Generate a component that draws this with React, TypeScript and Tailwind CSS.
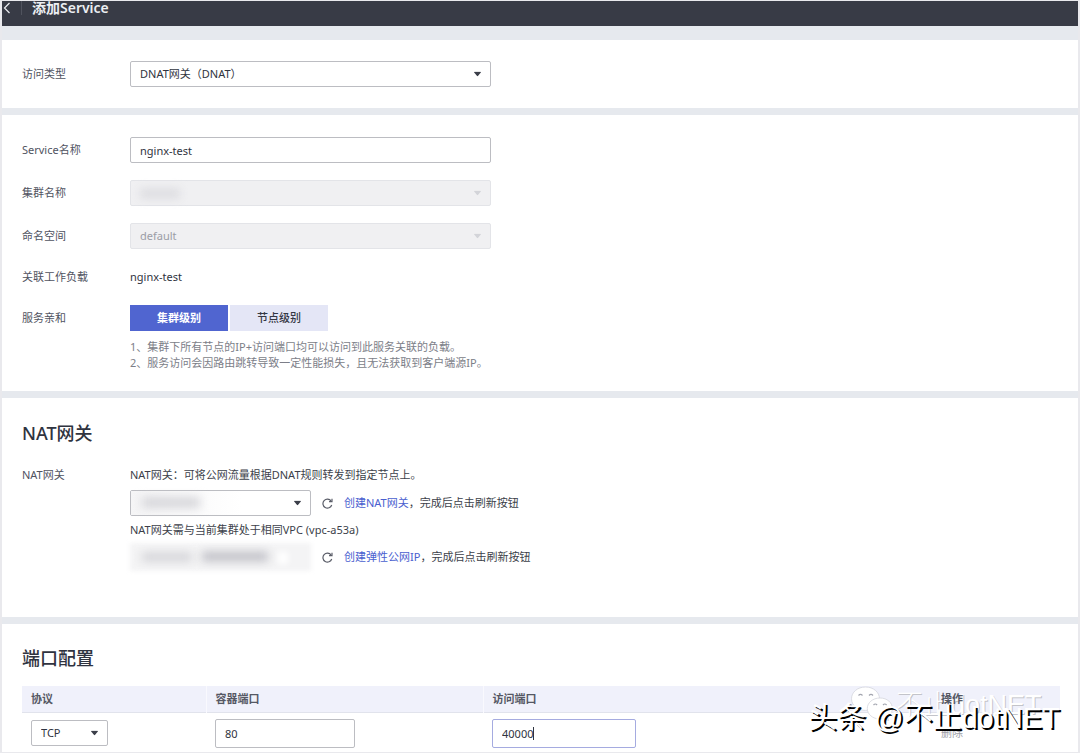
import type { ReactNode } from "react";

const controlBase =
  "w-full rounded-[2px] border px-[9px] text-[11px] outline-none appearance-none";
const controlNormal = "border-[#bcbdc2] bg-white text-[#2f3440]";
const controlDisabled = "border-[#e3e4e8] bg-[#f0f0f2] text-[#9b9da6] opacity-100";

function Caret({ className }: { className: string }) {
  return (
    <svg
      aria-hidden="true"
      viewBox="0 0 8 5"
      className={`pointer-events-none absolute right-[10px] top-1/2 h-[5px] w-[7px] -translate-y-1/2 ${className}`}
    >
      <path d="M0.6 0h6.8c.5 0 .7.5.4.9L4.5 4.7a.6.6 0 0 1-1 0L.2.9C-.1.5.1 0 .6 0z" fill="currentColor" />
    </svg>
  );
}

function Select({
  id,
  options,
  disabled,
  label,
}: {
  id: string;
  options: string[];
  disabled?: boolean;
  label?: string;
}) {
  return (
    <div className="relative">
      <select
        id={id}
        aria-label={label}
        disabled={disabled}
        className={`${controlBase} h-[26px] ${disabled ? controlDisabled : controlNormal}`}
      >
        {options.map((o) => (
          <option key={o}>{o}</option>
        ))}
      </select>
      <Caret className={disabled ? "text-[#d3d4d9]" : "text-[#3c3f4a]"} />
    </div>
  );
}

function Row({
  label,
  htmlFor,
  children,
}: {
  label: string;
  htmlFor?: string;
  children: ReactNode;
}) {
  return (
    <div className="flex items-center">
      {htmlFor ? (
        <label htmlFor={htmlFor} className="w-[108px] shrink-0 text-[#50535f]">
          {label}
        </label>
      ) : (
        <span className="w-[108px] shrink-0 text-[#50535f]">{label}</span>
      )}
      <div className="w-full max-w-[361px]">{children}</div>
    </div>
  );
}

function RefreshButton({ label }: { label: string }) {
  return (
    <button type="button" aria-label={label} className="mx-[11px] shrink-0 text-[#5a5d68]">
      <svg viewBox="0 0 12 12" className="block h-[11px] w-[11px]" fill="none" stroke="currentColor" strokeWidth="1.3">
        <path d="M10.6 7.6A4.9 4.9 0 1 1 9.9 3.2" />
        <path d="M10.9 0.8v3.2H7.700" />
      </svg>
    </button>
  );
}

function Watermark() {
  return (
    <div aria-hidden="true" className="pointer-events-none absolute bottom-0 right-0 h-[70px] w-[280px] select-none whitespace-nowrap font-['Liberation_Sans','Noto_Sans_CJK_SC',sans-serif]">
      <svg viewBox="0 0 44 38" className="absolute left-[52px] top-[2px] h-[38px] w-[44px]">
        <path
          d="M15.500 3C7.500 3 1.500 8.200 1.500 14.800c0 3.700 1.900 6.900 5 9.100l-1.400 4.300 5-2.600c1.700.5 3.500.8 5.400.8 8 0 14-5.100 14-11.600S23.500 3 15.500 3z"
          fill="#fff"
          stroke="#d4d5dd"
          strokeWidth=".8"
        />
        <path
          d="M30 14c-7.300 0-12.700 4.700-12.700 10.500S22.700 35 30 35c1.500 0 3-.2 4.300-.6l4.400 2.300-1.200-3.900c3-1.900 4.900-4.900 4.900-8.300C42.400 18.700 37.200 14 30 14z"
          fill="#fff"
          stroke="#d4d5dd"
          strokeWidth=".8"
        />
        <path
          d="M8.500 11.500q2-2.200 4 0M19 11.500q2-2.200 4 0M23.500 21q1.800-2 3.600 0M33 21q1.800-2 3.600 0"
          fill="none"
          stroke="#a4a6b0"
          strokeWidth="1.200"
        />
      </svg>
      <span className="absolute left-[98px] top-[7px] text-[27px] font-light leading-[32px] text-white [text-shadow:1px_1px_0_#c3c4ca]">
        不止dotNET
      </span>
      <span className="absolute left-[10px] top-[18px] text-[29px] leading-[36px] text-white [text-shadow:2px_2px_0_#000]">
        头条 @不止dotNET
      </span>
    </div>
  );
}

export default function App() {
  return (
    <div className="relative overflow-hidden border-y border-l-2 border-r-2 border-[#e9e9ed] bg-[#e6e9ee] font-['Noto_Sans','Noto_Sans_CJK_SC',sans-serif] text-[11px] leading-[16px] text-[#3c3f4a]">
      <header className="flex h-[25px] items-start bg-[#383b46] text-[#eceef2]">
        <button type="button" aria-label="返回" className="flex h-[14px] w-[19px] items-center">
          <svg viewBox="0 0 10 12" className="h-[12px] w-[10px]" fill="none" stroke="currentColor" strokeWidth="1.2">
            <path d="M7.500 1 2.500 6l5 5" />
          </svg>
        </button>
        <span className="h-[14px] w-px bg-[#50535e]" />
        <h1 className="ml-[10px] text-[14px] font-semibold leading-[14px]">添加Service</h1>
      </header>

      <main className="flex flex-col gap-[7px] pt-[14px]">
        <section className="bg-white px-[20px] pb-[21px] pt-[21px]">
          <Row label="访问类型" htmlFor="access-type">
            <Select id="access-type" options={["DNAT网关（DNAT）"]} />
          </Row>
        </section>

        <section className="flex flex-col gap-[17px] bg-white px-[20px] pb-[20px] pt-[22px]">
          <Row label="Service名称" htmlFor="service-name">
            <input
              id="service-name"
              defaultValue="nginx-test"
              className={`${controlBase} block h-[26px] ${controlNormal}`}
            />
          </Row>
          <Row label="集群名称" htmlFor="cluster">
            <div className="relative">
              <Select id="cluster" options={[""]} disabled />
              <span className="absolute left-[10px] top-[8px] h-[11px] w-[40px] bg-[#dedee2] blur-[4px]" />
            </div>
          </Row>
          <Row label="命名空间" htmlFor="namespace">
            <Select id="namespace" options={["default"]} disabled />
          </Row>
          <Row label="关联工作负载">
            <p className="leading-[22px] text-[#2f3440]">nginx-test</p>
          </Row>
          <div>
            <Row label="服务亲和">
              <div className="flex gap-[2px]">
                <button type="button" aria-pressed="true" className="h-[26px] w-[98px] bg-[#5065d0] font-bold text-white">
                  集群级别
                </button>
                <button type="button" aria-pressed="false" className="h-[26px] w-[98px] bg-[#e4e6f6] font-medium text-[#343744]">
                  节点级别
                </button>
              </div>
            </Row>
            <div className="ml-[108px] mt-[8px] text-[#7c7e88]">
              <p>1、集群下所有节点的IP+访问端口均可以访问到此服务关联的负载。</p>
              <p>2、服务访问会因路由跳转导致一定性能损失，且无法获取到客户端源IP。</p>
            </div>
          </div>
        </section>

        <section className="bg-white px-[20px] pb-[46px] pt-[21px]">
          <h2 className="text-[18px] font-medium leading-[28px] text-[#2f3340]">NAT网关</h2>
          <div className="mt-[20px] flex items-start">
            <label htmlFor="nat-gateway" className="w-[108px] shrink-0 text-[#50535f]">
              NAT网关
            </label>
            <div>
              <p>NAT网关：可将公网流量根据DNAT规则转发到指定节点上。</p>
              <div className="mt-[7px] flex items-center">
                <div className="relative w-[181px]">
                  <Select id="nat-gateway" options={[""]} />
                  <span className="absolute left-px top-px h-[24px] w-[110px] bg-linear-to-r from-[#f5f5f6] to-white" />
                  <span className="absolute left-[12px] top-[7px] h-[11px] w-[58px] bg-[#d6d6da] blur-[5px]" />
                </div>
                <RefreshButton label="刷新NAT网关" />
                <a href="#nat" className="text-[#4a60cf]">创建NAT网关</a>
                <span>，完成后点击刷新按钮</span>
              </div>
              <p className="mt-[6px]">NAT网关需与当前集群处于相同VPC (vpc-a53a)</p>
              <div className="mt-[5px] flex items-center">
                <div className="relative h-[28px] w-[181px]">
                  <select aria-label="弹性公网IP" className="h-[28px] w-full appearance-none bg-[#f4f4f5] blur-[2px]">
                    <option></option>
                  </select>
                  <span className="absolute left-[12px] top-[10px] h-[8px] w-[50px] bg-[#d0d0d5] blur-[5px]" />
                  <span className="absolute left-[72px] top-[9px] h-[9px] w-[66px] bg-[#bcbcc3] blur-[5px]" />
                  <span className="absolute left-[148px] top-[9px] h-[12px] w-[10px] bg-white blur-[3px]" />
                </div>
                <RefreshButton label="刷新弹性公网IP" />
                <a href="#eip" className="text-[#4a60cf]">创建弹性公网IP</a>
                <span>，完成后点击刷新按钮</span>
              </div>
            </div>
          </div>
        </section>

        <section className="bg-white pl-[20px] pr-[18px] pt-[20px]">
          <h2 className="text-[18px] font-medium leading-[28px] text-[#2f3340]">端口配置</h2>
          <table className="mt-[14px] w-full table-fixed border-collapse text-left">
            <thead>
              <tr className="h-[26px] border-b border-[#e1e3ec] bg-[#f0f1fb] text-[#555864]">
                <th className="w-[184px] border-r border-[#f9f9fe] pl-[9px] font-bold">协议</th>
                <th className="w-[277px] border-r border-[#f9f9fe] pl-[9px] font-bold">容器端口</th>
                <th className="pl-[9px] font-bold">访问端口</th>
                <th className="w-[128px] pl-[9px] font-bold">
                  <span className="relative z-10">操作</span>
                </th>
              </tr>
            </thead>
            <tbody>
              <tr className="h-[40px]">
                <td className="pl-[9px] pt-[2px]">
                  <div className="w-[77px]">
                    <Select id="protocol" label="协议" options={["TCP"]} />
                  </div>
                </td>
                <td className="pl-[9px] pt-[2px]">
                  <input
                    aria-label="容器端口"
                    defaultValue="80"
                    className={`${controlBase} block h-[29px] max-w-[140px] ${controlNormal}`}
                  />
                </td>
                <td className="pl-[9px] pt-[2px]">
                  <div className="relative max-w-[144px]">
                    <input
                      aria-label="访问端口"
                      defaultValue="40000"
                      className={`${controlBase} block h-[29px] border-[#a5abe0] bg-white text-[#2f3440]`}
                    />
                    <span className="absolute left-[41px] top-[8px] h-[13px] w-px bg-[#2f3440]" />
                  </div>
                </td>
                <td className="pl-[9px] pt-[2px]">
                  <button type="button" className="block text-[#a0a1a8]">删除</button>
                </td>
              </tr>
            </tbody>
          </table>
        </section>
      </main>
      <Watermark />
    </div>
  );
}
